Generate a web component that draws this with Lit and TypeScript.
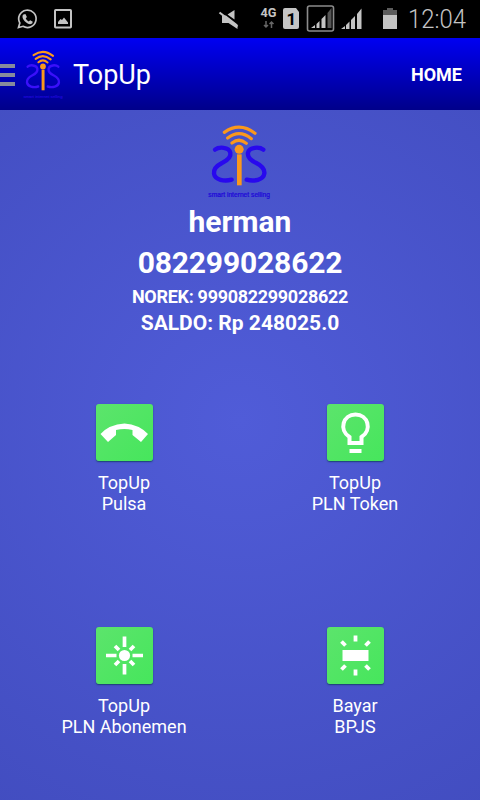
import { LitElement, html, svg, css } from "lit";
import { customElement, property } from "lit/decorators.js";

@customElement("sis-logo")
class SisLogo extends LitElement {
  @property({ type: Boolean, reflect: true }) small = false;
  static styles = css`
    :host { display: block; width: 74px; height: 77px; }
    :host([small]) { width: 47px; height: 51px; }
    svg { display: block; width: 100%; height: 100%; }
    text { font: 19px "Liberation Sans", sans-serif; fill: #1e08d8; stroke: #1e08d8; stroke-width: 0.7; }
    .curve { stroke: #2808ee; stroke-width: 13; }
    :host([small]) .curve { stroke: #3a10fa; stroke-width: 11; }
  `;
  render() {
    return html`<svg viewBox="39 26 222 231" preserveAspectRatio="none" fill="none">
      <g class="curve" stroke-linecap="round">
        <path d="M75 106C86 97 117 97 121 115C124 131 109 140 96 146C80 154 70 163 72 178C75 197 103 202 125 196" />
        <path d="M220 106C209 97 178 97 174 115C171 131 186 140 199 146C215 154 225 163 223 178C220 197 192 202 170 196" />
      </g>
      <g stroke="#fb981c" stroke-width="9.500" stroke-linecap="round">
        <path d="M103 54Q149 22 195 57M113 71Q148 44 184 73M126 86Q148 69 169 87" />
        <path d="M148 120V213" stroke-width="14" stroke-linecap="butt" />
      </g>
      <circle cx="147.500" cy="105" r="13.500" fill="#fb981c" />
      <text x="55" y="247" textLength="185" lengthAdjust="spacingAndGlyphs">smart internet selling</text>
    </svg>`;
  }
}

@customElement("status-bar")
class StatusBar extends LitElement {
  static styles = css`
    :host { display: block; height: 38px; background: #000; }
    svg { display: block; }
    text { font-family: Roboto, sans-serif; }
  `;
  render() {
    return html`<svg width="480" height="38" fill="#c4c4c4">
      <path d="M18.500 27.500L19.800 23A8.700 8.700 0 1 1 23 26.300Z" fill="none" stroke="#c4c4c4" stroke-width="1.700" />
      <path d="M23.4 14.5l2-.6 1.500 3-1.200 1.600q1 2 3 3l1.500-1.300 2.600 1.500q0 2.400-2.600 2.500c-4-.4-8-5-7.700-8q0-1 .9-1.700z" />
      <rect x="55" y="10" width="16" height="17.500" rx=".8" fill="none" stroke="#c4c4c4" stroke-width="2" />
      <path d="M58 24v-2l2.500-3 1.500 1 2-2.500 4 5V24z" />
      <path d="M234.500 10v9.500l-7-5zM222 15.500l4 0 11.500 9v4.500l-9-6-6.500 0z" />
      <path d="M219.500 12.500L237.500 26.500" stroke="#c4c4c4" stroke-width="2.200" />
      <text x="260.500" y="17" font-size="12" font-weight="700" textLength="16" lengthAdjust="spacingAndGlyphs">4G</text>
      <path d="M266 21v6m-2-2l2 2 2-2M271.500 28v-6m-2 2l2-2 2 2" stroke="#666" stroke-width="1.500" fill="none" />
      <path d="M285 8h11l3 4v15q0 2-2 2H285q-2 0-2-2V10q0-2 2-2z" />
      <text x="286.500" y="24.500" font-size="17" font-weight="700" fill="#000">1</text>
      <rect x="307.500" y="6" width="26" height="25" rx="2" fill="none" stroke="#8c8c8c" stroke-width="1.600" />
      <path d="M311 28l4-3v3zM316.500 24l3-3v7h-3zM321.500 19l4-4v13h-4z" />
      <path d="M327.500 13l4-5v20h-4z" fill="#555" />
      <path d="M341 29l4-3v3zM346 25l3.500-3.500V29H346zM351 20l4-4v13h-4zM357 14l4.500-5.500V29H357z" />
      <path d="M387 8h6v2h4v5h-14v-5h4z" fill="#5c5c5c" />
      <path d="M383 15h14v14h-14z" />
      <text x="408" y="28" font-size="25" font-weight="300" textLength="58" lengthAdjust="spacingAndGlyphs">12:04</text>
    </svg>`;
  }
}

const glyphs = {
  phone: svg`<path d="M4.500 30Q13 20.500 28.500 19.500Q43 20.500 52 30L45 38L36.500 31V26Q28.500 24 20 26V31L12 38Z" fill="#fff" />`,
  bulb: svg`<path d="M22.500 39V33C11.500 26 16 10.500 28.500 10.500S45.500 26 34.500 33V39Z" fill="none" stroke="#fff" stroke-width="4" />
    <path d="M22.500 47h12" stroke="#fff" stroke-width="4" />`,
  sun: svg`<circle cx="28.500" cy="28.500" r="5.600" fill="#fff" />
    <path d="M28.500 9.500v10.500M28.500 37v10.500M10 28.500h10.500M36.500 28.500h10.500" stroke="#fff" stroke-width="3.700" />
    <path d="M19 19l4 4M38 19l-4 4M19 38l4-4M38 38l-4-4" stroke="#fff" stroke-width="3.700" />`,
  panel: svg`<path d="M15.500 23h26v11h-26z" fill="#fff" />
    <path d="M28.500 8.500v6M28.500 42.500v6M14.500 14.500l4 4M42.500 14.500l-4 4M14.500 42.500l4-4M42.500 42.500l-4-4" stroke="#fff" stroke-width="3.800" />`,
};

@customElement("menu-tile")
class MenuTile extends LitElement {
  @property() icon: keyof typeof glyphs = "phone";
  @property() first = "";
  @property() second = "";
  static styles = css`
    :host { display: flex; flex-direction: column; align-items: center; gap: 11px; font-size: 18px; line-height: 21px; text-align: center; }
    .icon { width: 57px; height: 57px; border-radius: 3px; background: linear-gradient(135deg, #5ce46c, #46e65c); box-shadow: 0 1px 1.500px rgba(15, 60, 90, 0.8); }
    svg { display: block; }
  `;
  render() {
    return html`<div class="icon"><svg width="57" height="57">${glyphs[this.icon]}</svg></div>
      <div>${this.first}<br />${this.second}</div>`;
  }
}

@customElement("app-root")
class AppRoot extends LitElement {
  static styles = css`
    :host { display: flex; flex-direction: column; width: 480px; height: 800px; overflow: hidden; color: #fff; font-family: Roboto, sans-serif; }
    header { box-sizing: border-box; flex: none; display: flex; align-items: center; height: 72px; padding-right: 18px; background: linear-gradient(#0000f2, #00008a); }
    .drawer { display: flex; flex-direction: column; gap: 5px; width: 15px; margin: 1px 4.500px 0 0; }
    .drawer i { height: 4px; background: #868a9c; }
    h1 { margin: 2px auto 0 6.500px; font-size: 27px; font-weight: 400; line-height: 32px; }
    .home { font-size: 18px; font-weight: 700; line-height: 22px; margin-top: 1px; }
    main { flex: 1; display: flex; flex-direction: column; align-items: center; background: radial-gradient(circle 460px at 50% 42%, #505cd8, #424dc0); }
    .logo { margin-top: 13px; }
    .account { display: flex; flex-direction: column; align-items: center; margin-top: 1px; font-weight: 700; white-space: nowrap; }
    .name, .phone { font-size: 30px; line-height: 41px; }
    .phone { letter-spacing: -0.15px; }
    .norek { font-size: 18px; line-height: 27px; letter-spacing: -0.3px; }
    .saldo { font-size: 21px; line-height: 27px; }
    .menu { display: grid; grid-template-columns: 231px 231px; grid-auto-rows: 223px; margin: 66.500px 1px 0 0; }
  `;
  render() {
    return html`
      <status-bar></status-bar>
      <header>
        <div class="drawer"><i></i><i></i><i></i></div>
        <sis-logo small></sis-logo>
        <h1>TopUp</h1>
        <div class="home">HOME</div>
      </header>
      <main>
        <sis-logo class="logo"></sis-logo>
        <div class="account">
          <div class="name">herman</div>
          <div class="phone">082299028622</div>
          <div class="norek">NOREK: 999082299028622</div>
          <div class="saldo">SALDO: Rp 248025.0</div>
        </div>
        <div class="menu">
          <menu-tile icon="phone" first="TopUp" second="Pulsa"></menu-tile>
          <menu-tile icon="bulb" first="TopUp" second="PLN Token"></menu-tile>
          <menu-tile icon="sun" first="TopUp" second="PLN Abonemen"></menu-tile>
          <menu-tile icon="panel" first="Bayar" second="BPJS"></menu-tile>
        </div>
      </main>
    `;
  }
}
